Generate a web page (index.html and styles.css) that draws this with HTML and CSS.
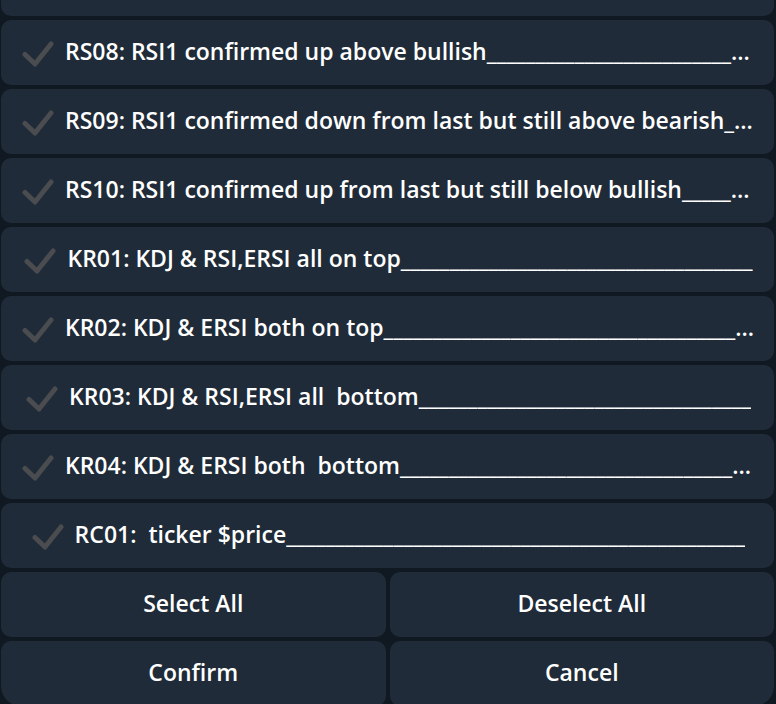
FILE: index.html
```html
<!DOCTYPE html>
<html>
<head>
<meta charset="utf-8">
<link rel="stylesheet" href="styles.css">
</head>
<body>
<div class="keyboard">
  <div class="btn btn-cut"></div>
  <div class="btn"><svg class="chk" viewBox="0 0 32 26"><path d="M3 13.5 L13 23 L29 3"/></svg><span class="label">RS08: RSI1 confirmed up above bullish______________________________________________________</span></div>
  <div class="btn"><svg class="chk" viewBox="0 0 32 26"><path d="M3 13.5 L13 23 L29 3"/></svg><span class="label">RS09: RSI1 confirmed down from last but still above bearish______________________________</span></div>
  <div class="btn"><svg class="chk" viewBox="0 0 32 26"><path d="M3 13.5 L13 23 L29 3"/></svg><span class="label">RS10: RSI1 confirmed up from last but still below bullish__________________________________</span></div>
  <div class="btn"><svg class="chk" viewBox="0 0 32 26"><path d="M3 13.5 L13 23 L29 3"/></svg><span class="label">KR01: KDJ &amp; RSI,ERSI all on top____________________________________</span></div>
  <div class="btn"><svg class="chk" viewBox="0 0 32 26"><path d="M3 13.5 L13 23 L29 3"/></svg><span class="label">KR02: KDJ &amp; ERSI both on top______________________________________________</span></div>
  <div class="btn"><svg class="chk" viewBox="0 0 32 26"><path d="M3 13.5 L13 23 L29 3"/></svg><span class="label">KR03: KDJ &amp; RSI,ERSI all&nbsp; bottom__________________________________</span></div>
  <div class="btn"><svg class="chk" viewBox="0 0 32 26"><path d="M3 13.5 L13 23 L29 3"/></svg><span class="label">KR04: KDJ &amp; ERSI both&nbsp; bottom______________________________________________</span></div>
  <div class="btn"><svg class="chk" viewBox="0 0 32 26"><path d="M3 13.5 L13 23 L29 3"/></svg><span class="label">RC01:&nbsp; ticker $price_______________________________________________</span></div>
  <div class="row2">
    <div class="btn">Select All</div>
    <div class="btn">Deselect All</div>
  </div>
  <div class="row2 last">
    <div class="btn">Confirm</div>
    <div class="btn">Cancel</div>
  </div>
</div>
</body>
</html>
```
FILE: styles.css
```css
html, body {
  margin: 0;
  padding: 0;
  background: #101822;
  height: 100%;
  overflow: hidden;
}
.keyboard {
  display: flex;
  flex-direction: column;
  gap: 4px;
  padding: 0 2px 0 1px;
  font-family: "Open Sans", "DejaVu Sans", sans-serif;
  font-weight: 600;
  font-size: 23px;
  color: #ffffff;
}
.btn {
  background: #1f2b38;
  border-radius: 10px;
  height: 65px;
  display: flex;
  align-items: center;
  justify-content: center;
  padding: 0 19px 0 21px;
  box-sizing: border-box;
  min-width: 0;
  white-space: nowrap;
  line-height: 30px;
}
.btn-cut {
  height: 16px;
  border-radius: 0 0 10px 10px;
}
.chk {
  flex: none;
  width: 32px;
  height: 26px;
  margin-right: 11px;
  margin-top: 2px;
  fill: none;
  stroke: #4a4c4f;
  stroke-width: 5;
  stroke-linecap: round;
  stroke-linejoin: round;
}
.label {
  min-width: 0;
  overflow: hidden;
  text-overflow: ellipsis;
  white-space: nowrap;
  padding-bottom: 3px;
}
.row2 {
  display: grid;
  grid-template-columns: 1fr 1fr;
  gap: 4px;
}
.row2 .btn {
  padding: 0 10px 3px;
}
.row2.last .btn:first-child {
  border-bottom-left-radius: 20px;
}
.row2.last .btn:last-child {
  border-bottom-right-radius: 20px;
}
```
